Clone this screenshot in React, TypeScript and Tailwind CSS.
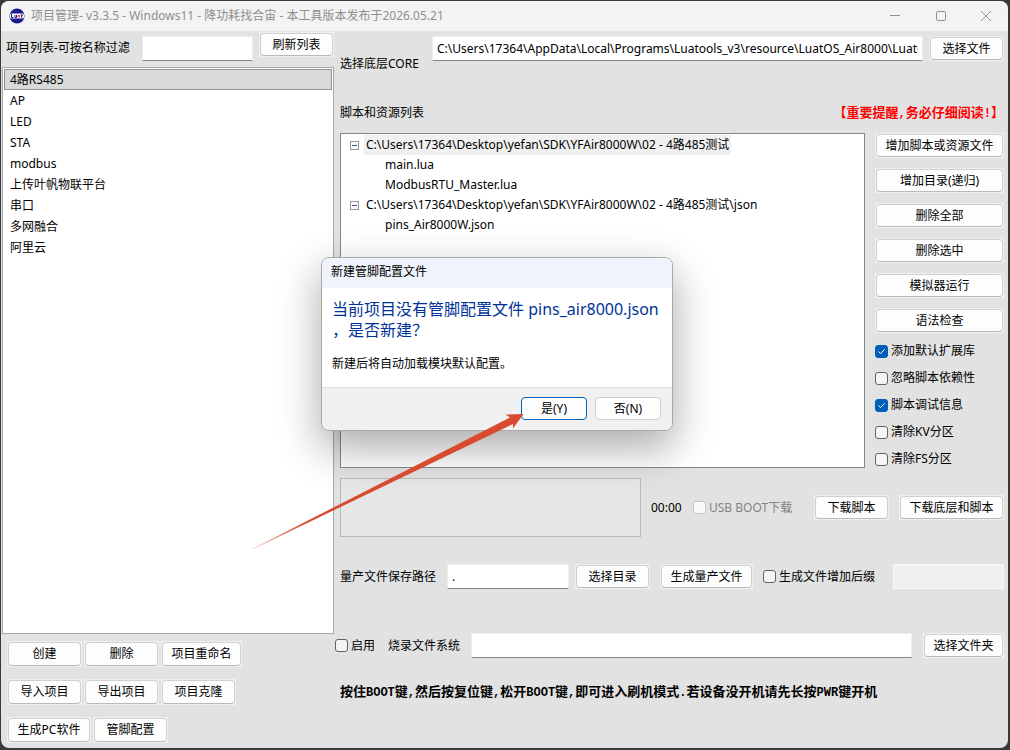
import { useState } from "react";
import type { ReactNode } from "react";
import clsx from "clsx";

const projects = ["4路RS485", "AP", "LED", "STA", "modbus", "上传叶帆物联平台", "串口", "多网融合", "阿里云"];

const scripts = [
  {
    dir: "C:\\Users\\17364\\Desktop\\yefan\\SDK\\YFAir8000W\\02 - 4路485测试",
    files: ["main.lua", "ModbusRTU_Master.lua"],
  },
  {
    dir: "C:\\Users\\17364\\Desktop\\yefan\\SDK\\YFAir8000W\\02 - 4路485测试\\json",
    files: ["pins_Air8000W.json"],
  },
];

const scriptActions = ["增加脚本或资源文件", "增加目录(递归)", "删除全部", "删除选中", "模拟器运行", "语法检查"];

const options = [
  { label: "添加默认扩展库", checked: true },
  { label: "忽略脚本依赖性", checked: false },
  { label: "脚本调试信息", checked: true },
  { label: "清除KV分区", checked: false },
  { label: "清除FS分区", checked: false },
];

const WinButton = ({ children, className = "w-[75px] h-[25px]" }: { children: ReactNode; className?: string }) => (
  <button type="button" className={clsx("group flex shrink-0 bg-[#efefef] p-px", className)}>
    <span className="flex h-full w-full items-center justify-center rounded border border-[#d0d0d0] border-b-[#bababa] bg-[#fdfdfd] whitespace-nowrap group-hover:bg-[#e9f3fb]">
      {children}
    </span>
  </button>
);

const Check = ({ label, checked = false, disabled = false }: { label: string; checked?: boolean; disabled?: boolean }) => (
  <label className={clsx("flex h-[18px] shrink-0 items-center gap-[3px] whitespace-nowrap", disabled && "text-[#838383]")}>
    <span className="grid size-[13px]">
      <input
        type="checkbox"
        defaultChecked={checked}
        disabled={disabled}
        className="peer col-start-1 row-start-1 size-[13px] appearance-none rounded-[3px] border border-[#626262] bg-[#f5f5f5] checked:border-[#005fb8] checked:bg-[#005fb8] disabled:border-[#c5c5c5] disabled:bg-[#fafafa]"
      />
      <svg viewBox="0 0 13 13" className="pointer-events-none invisible col-start-1 row-start-1 size-[13px] peer-checked:visible">
        <path d="M3.5 6.5 5.5 8.5 9.5 4.5" fill="none" stroke="#fff" strokeWidth="1" />
      </svg>
    </span>
    {label}
  </label>
);

const inputStyle = "h-[25px] min-w-0 rounded-[1px] border border-[#ededed] border-b-[#868686] bg-white px-1 outline-none";

// song-style bold notice, latin runs use a narrower mono face
const Notice = ({ text, className }: { text: string; className?: string }) => (
  <p className={clsx("text-[13px] leading-[18px] font-bold whitespace-nowrap", className)}>
    {text.split(/([\x20-\x7e]+)/).map((part, i) =>
      i % 2 ? (
        <span key={i} className="font-['Liberation_Mono',monospace] text-[12px]">{part}</span>
      ) : (
        part
      )
    )}
  </p>
);

const TitleBar = () => (
  <header className="flex h-[30px] shrink-0 items-center bg-[#f3f3f3] pl-2 text-[#8f8f8f]">
    <svg viewBox="0 0 16 16" className="size-4">
      <circle cx="8" cy="8" r="7.5" fill="#1b1b8c" />
      <rect x="1" y="5.5" width="14" height="5" rx="1.5" fill="#fff" />
      <path d="M2.5 6v3.500h2M6 7v2.500h1.500V7" fill="none" stroke="#1b1b8c" strokeWidth="1" />
      <path d="M9 9.500v-2h1.500v2" fill="none" stroke="#e0322c" strokeWidth="1" />
      <path d="M11.500 7h2.500M12.700 7v3" fill="none" stroke="#1b1b8c" strokeWidth="1" />
    </svg>
    <h1 className="ml-1.5 flex-1 whitespace-nowrap">
      项目管理- v3.3.5 - Windows11 - 降功耗找合宙 - 本工具版本发布于2026.05.21
    </h1>
    <button type="button" aria-label="最小化" className="flex h-full w-[46px] items-center justify-center">
      <svg viewBox="0 0 10 10" className="size-[10px]"><path d="M0 4.5h10" stroke="#8f8f8f" /></svg>
    </button>
    <button type="button" aria-label="最大化" className="flex h-full w-[46px] items-center justify-center">
      <svg viewBox="0 0 10 10" className="size-[10px]"><rect x=".5" y=".5" width="9" height="9" rx="1" fill="none" stroke="#8f8f8f" /></svg>
    </button>
    <button type="button" aria-label="关闭" className="flex h-full w-[44px] items-center justify-center">
      <svg viewBox="0 0 10 10" className="size-[10px]"><path d="M0 0 10 10M10 0 0 10" stroke="#8f8f8f" /></svg>
    </button>
  </header>
);

const ProjectPanel = () => {
  const [selected, setSelected] = useState(projects[0]);

  return (
    <aside className="flex w-[333px] shrink-0 flex-col">
      <div className="flex h-9 items-start pt-px pl-[5px]">
        <label htmlFor="filter" className="w-[136px] pt-[7px] whitespace-nowrap">项目列表-可按名称过滤</label>
        <input id="filter" className={clsx(inputStyle, "mt-1 mr-1.5 w-[111px]")} />
        <WinButton>刷新列表</WinButton>
      </div>

      <ul role="listbox" aria-label="项目列表" className="ml-px flex-1 border border-[#a5a8ac] bg-white p-px">
        {projects.map((name) => (
          <li
            key={name}
            role="option"
            aria-selected={name === selected}
            onClick={() => setSelected(name)}
            className={clsx(
              "flex h-[21px] items-center border px-[5px]",
              name === selected ? "border-[#919191] bg-[#d9d9d9]" : "border-transparent"
            )}
          >
            {name}
          </li>
        ))}
      </ul>

      <div className="flex flex-col gap-3 pt-[7px] pb-[5px] pl-1.5">
        <div className="flex gap-0.5">
          <WinButton className="h-[26px] w-[75px]">创建</WinButton>
          <WinButton className="h-[26px] w-[75px]">删除</WinButton>
          <WinButton className="h-[26px] w-[81px]">项目重命名</WinButton>
        </div>
        <div className="flex gap-0.5">
          <WinButton className="h-[26px] w-[75px]">导入项目</WinButton>
          <WinButton className="h-[26px] w-[75px]">导出项目</WinButton>
          <WinButton className="h-[26px] w-[75px]">项目克隆</WinButton>
        </div>
        <div className="flex gap-0.5">
          <WinButton className="h-[26px] w-[84px]">生成PC软件</WinButton>
          <WinButton className="h-[26px] w-[75px]">管脚配置</WinButton>
        </div>
      </div>
    </aside>
  );
};

const ScriptTree = () => (
  <ul role="tree" aria-label="脚本和资源列表" className="min-w-0 flex-1 border border-[#828790] bg-white pt-px pl-[9px]">
    {scripts.map((group, i) => (
      <li key={group.dir} role="treeitem" aria-expanded="true">
        <div className="flex h-5 items-center">
          <button type="button" aria-label="折叠">
            <svg viewBox="0 0 9 9" className="size-[9px]">
              <rect x=".5" y=".5" width="8" height="8" fill="#fafafa" stroke="#969696" />
              <path d="M2 4.5h5" stroke="#3a4fa0" />
            </svg>
          </button>
          <span className={clsx("ml-[5px] h-5 px-0.5 leading-5 whitespace-nowrap", i === 0 && "bg-[#f0f0f0]")}>{group.dir}</span>
        </div>
        <ul role="group">
          {group.files.map((file) => (
            <li key={file} role="treeitem" className="h-5 pl-[35px] leading-5">{file}</li>
          ))}
        </ul>
      </li>
    ))}
  </ul>
);

const PinConfigDialog = () => (
  <div
    role="dialog"
    aria-labelledby="dialog-title"
    className="absolute top-[257px] left-[321px] w-[352px] overflow-hidden rounded-lg border border-[#a9a9a9] bg-white shadow-[0_16px_40px_2px_rgba(0,0,0,0.32)]"
  >
    <h2 id="dialog-title" className="h-[30px] bg-[#eff3fb] px-[9px] leading-[28px]">新建管脚配置文件</h2>
    <div className="h-[99px] px-2.5 pt-[11px]">
      <p className="text-[16px] leading-[21px] whitespace-nowrap text-[#003399]">
        当前项目没有管脚配置文件 pins_air8000.json
        <br />
        ，是否新建？
      </p>
      <p className="mt-3.5 leading-[18px]">新建后将自动加载模块默认配置。</p>
    </div>
    <div className="flex h-[43px] justify-end gap-2 border-t border-[#dfdfdf] bg-[#f0f0f0] px-[11px] pt-[9px]">
      <button type="button" className="h-[23px] w-[66px] rounded border border-[#0067c0] bg-[#fdfdfd]">是(Y)</button>
      <button type="button" className="h-[23px] w-[66px] rounded border border-[#d0d0d0] bg-[#fdfdfd]">否(N)</button>
    </div>
  </div>
);

const Arrow = () => (
  <svg viewBox="0 0 272 138" className="pointer-events-none absolute top-[413px] left-[252px] h-[138px] w-[272px]">
    <defs>
      <linearGradient id="tail" x1="0" x2="1" y1="0" y2="0">
        <stop offset="0" stopColor="#d94b30" stopOpacity="0.3" />
        <stop offset="0.2" stopColor="#d94b30" />
      </linearGradient>
    </defs>
    <path d="M0 136 258 4.500 253.500 1.500 271.500 1 261 15.500 261 11 0 136.600Z" fill="url(#tail)" />
  </svg>
);

const App = () => {
  return (
    <div className="relative flex min-h-screen bg-[#39383c] pt-px pr-0.5 pb-0.5 pl-px font-['Noto_Sans','Noto_Sans_CJK_SC',sans-serif] text-[12px] leading-[18px] text-black">
      <div className="flex min-w-0 flex-1 flex-col overflow-hidden rounded-lg bg-[#e2e2e2]">
        <TitleBar />
        <div className="flex flex-1">
          <ProjectPanel />

          <main className="flex min-w-0 flex-1 flex-col pt-[5px] pr-1 pl-1.5">
            <div className="flex h-14">
              <label htmlFor="core" className="w-[92px] self-center whitespace-nowrap">选择底层CORE</label>
              <input
                id="core"
                className={clsx(inputStyle, "mr-1.5 flex-1")}
                defaultValue={"C:\\Users\\17364\\AppData\\Local\\Programs\\Luatools_v3\\resource\\LuatOS_Air8000\\LuatOS-SoC.soc"}
              />
              <WinButton>选择文件</WinButton>
            </div>

            <div className="flex h-[41px] items-center justify-between">
              <h2>脚本和资源列表</h2>
              <Notice text="【重要提醒,务必仔细阅读!】" className="text-[#ff0000]" />
            </div>

            <div className="flex gap-2.5">
              <ScriptTree />
              <div className="flex w-[129px] shrink-0 flex-col">
                <div className="flex flex-col gap-2.5">
                  {scriptActions.map((action) => (
                    <WinButton key={action} className="h-[25px] w-full">{action}</WinButton>
                  ))}
                </div>
                <div className="flex flex-col gap-[9px] pt-[9px]">
                  {options.map((option) => (
                    <Check key={option.label} {...option} />
                  ))}
                </div>
              </div>
            </div>

            {/* Download progress */}
            <div className="mt-2.5 flex items-center">
              <div className="h-[59px] flex-1 border border-[#b9b9b9] bg-[#e6e6e6]"></div>
              <span className="ml-2.5 w-[42px]">00:00</span>
              <div className="w-[121px]">
                <Check label="USB BOOT下载" disabled />
              </div>
              <WinButton>下载脚本</WinButton>
              <WinButton className="ml-2.5 h-[25px] w-[105px]">下载底层和脚本</WinButton>
            </div>

            {/* Mass production output */}
            <div className="mt-[27px] flex items-center">
              <label htmlFor="output" className="w-[107px] whitespace-nowrap">量产文件保存路径</label>
              <input id="output" defaultValue="." className={clsx(inputStyle, "mr-1.5 flex-1")} />
              <WinButton>选择目录</WinButton>
              <WinButton className="ml-2.5 h-[25px] w-[93px]">生成量产文件</WinButton>
              <div className="ml-2.5 w-[130px]">
                <Check label="生成文件增加后缀" />
              </div>
              <input
                disabled
                aria-label="文件后缀"
                className="h-[25px] w-[111px] rounded-[1px] border border-[#f9f9f9] bg-[#efefef]"
              />
            </div>

            {/* Filesystem image */}
            <div className="mt-11 -ml-[5px] flex items-center">
              <div className="w-[53px]">
                <Check label="启用" />
              </div>
              <label htmlFor="fs" className="w-[83px] whitespace-nowrap">烧录文件系统</label>
              <input id="fs" className={clsx(inputStyle, "mr-[11px] flex-1")} />
              <WinButton className="h-[25px] w-[81px]">选择文件夹</WinButton>
            </div>

            <Notice
              className="mt-6"
              text="按住BOOT键,然后按复位键,松开BOOT键,即可进入刷机模式.若设备没开机请先长按PWR键开机"
            />
          </main>
        </div>
      </div>

      <PinConfigDialog />
      <Arrow />
    </div>
  );
};

export default App;
